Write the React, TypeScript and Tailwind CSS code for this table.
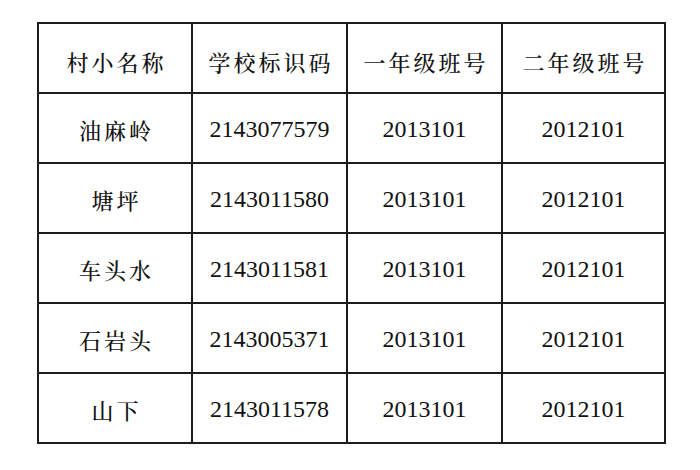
const header = ['村小名称', '学校标识码', '一年级班号', '二年级班号']

const rows = [
  ['油麻岭', '2143077579', '2013101', '2012101'],
  ['塘坪', '2143011580', '2013101', '2012101'],
  ['车头水', '2143011581', '2013101', '2012101'],
  ['石岩头', '2143005371', '2013101', '2012101'],
  ['山下', '2143011578', '2013101', '2012101'],
]

const cjk = "font-['Noto_Serif_CJK_SC','Noto_Sans_CJK_SC',serif]"
const num = "font-['Liberation_Serif',serif]"

export default function App() {
  return (
    <div className="w-[700px] h-[470px] bg-white pt-[22px] pl-[37px]">
      <div className="w-[629px] grid grid-cols-[152px_153px_153px_161px] auto-rows-[68px] gap-[2px] p-[2px] bg-[#1c1c1c]">
        {header.map((h, i) => (
          <div
            key={i}
            className={`bg-white flex items-center justify-center pt-[6px] text-[22px] font-medium text-[#111] tracking-[3px] pl-[3px] ${cjk}`}
          >
            {h}
          </div>
        ))}
        {rows.map((row, ri) =>
          row.map((cell, ci) => (
            <div
              key={`${ri}-${ci}`}
              className={
                ci === 0
                  ? `bg-white flex items-center justify-center pt-[2px] text-[22px] font-medium text-[#111] tracking-[3px] pl-[3px] ${cjk}`
                  : `bg-white flex items-center justify-center pt-[2px] text-[24px] text-[#111] ${num}`
              }
            >
              {cell}
            </div>
          ))
        )}
      </div>
    </div>
  )
}
